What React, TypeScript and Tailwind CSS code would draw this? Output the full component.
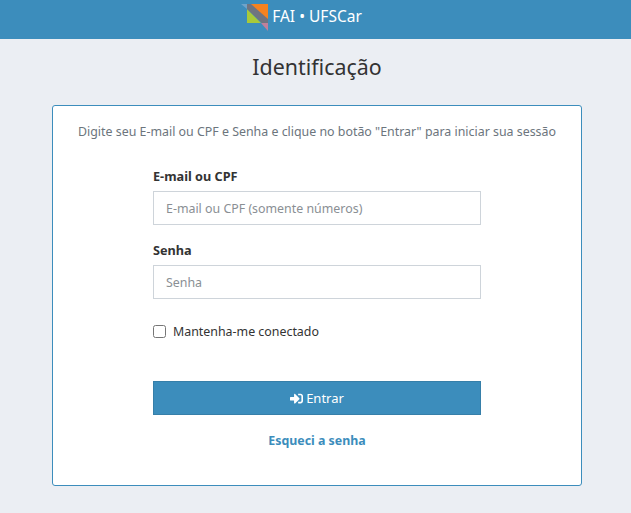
import React from "react";
import { FaSignInAlt } from "react-icons/fa";

const Logo = () => (
  <svg width="28" height="29" viewBox="0 0 28 29" className="block">
    <polygon points="0,1 6,1 12,9 12,11" fill="#6fa3c9" />
    <polygon points="6,1 27,1 27,20" fill="#f58220" />
    <polygon points="6,6 20,20 6,20" fill="#a8c93a" />
    <polygon points="6,1 10,1 27,16 27,21 22,21 6,6" fill="#6f7480" />
    <polygon points="20,20 27,20 27,28" fill="#c0809a" />
  </svg>
);

const App = () => {
  return (
    <div className="min-h-[513px] bg-[#ebeef3] font-['Noto_Sans',sans-serif] text-[#333]">
      <header className="flex h-[39px] items-start justify-center bg-[#3c8dbc] pr-[28px]">
        <div className="mt-[3px] flex items-start">
          <Logo />
          <span className="ml-[3px] mt-[3px] text-[15.5px] leading-5 text-white">FAI • UFSCar</span>
        </div>
      </header>

      <div className="ml-[52px] w-[530px]">
        <h1 className="mt-[13px] text-center text-[21.4px] leading-[30px] text-[#333]">Identificação</h1>

        <main className="mt-[23px] h-[381px] rounded-[3px] border border-[#3c8dbc] bg-white">
          <p className="mt-[16px] text-center text-[12.4px] leading-5 text-[#6c757d]">
            Digite seu E-mail ou CPF e Senha e clique no botão "Entrar" para iniciar sua sessão
          </p>

          <form className="mx-auto mt-[24px] w-[328px]">
            <label className="block text-[12.7px] font-bold leading-5 text-[#333]">E-mail ou CPF</label>
            <input
              placeholder="E-mail ou CPF (somente números)"
              className="mt-[5px] block h-[34px] w-full border border-[#ced4da] bg-white px-3 text-[12.4px] outline-none placeholder:text-[#8a8f94]"
            />

            <label className="mt-[15px] block text-[12.7px] font-bold leading-5 text-[#333]">Senha</label>
            <input
              type="password"
              placeholder="Senha"
              className="mt-[5px] block h-[34px] w-full border border-[#ced4da] bg-white px-3 text-[12.4px] outline-none placeholder:text-[#8a8f94]"
            />

            <label className="mt-[22px] flex items-center text-[12.4px] leading-5 text-[#333]">
              <input type="checkbox" className="h-[13px] w-[13px]" />
              <span className="ml-[7px] pt-px">Mantenha-me conectado</span>
            </label>

            <button
              type="button"
              className="mt-[39px] flex h-[34px] w-full items-center justify-center gap-[3px] border border-[#367fa9] bg-[#3c8dbc] text-[13px] text-white"
            >
              <FaSignInAlt size={13} />
              <span className="pt-px">Entrar</span>
            </button>

            <p className="mt-[16px] text-center text-[12.4px] font-bold leading-5 text-[#3c8dbc]">Esqueci a senha</p>
          </form>
        </main>
      </div>
    </div>
  );
};

export default App;
